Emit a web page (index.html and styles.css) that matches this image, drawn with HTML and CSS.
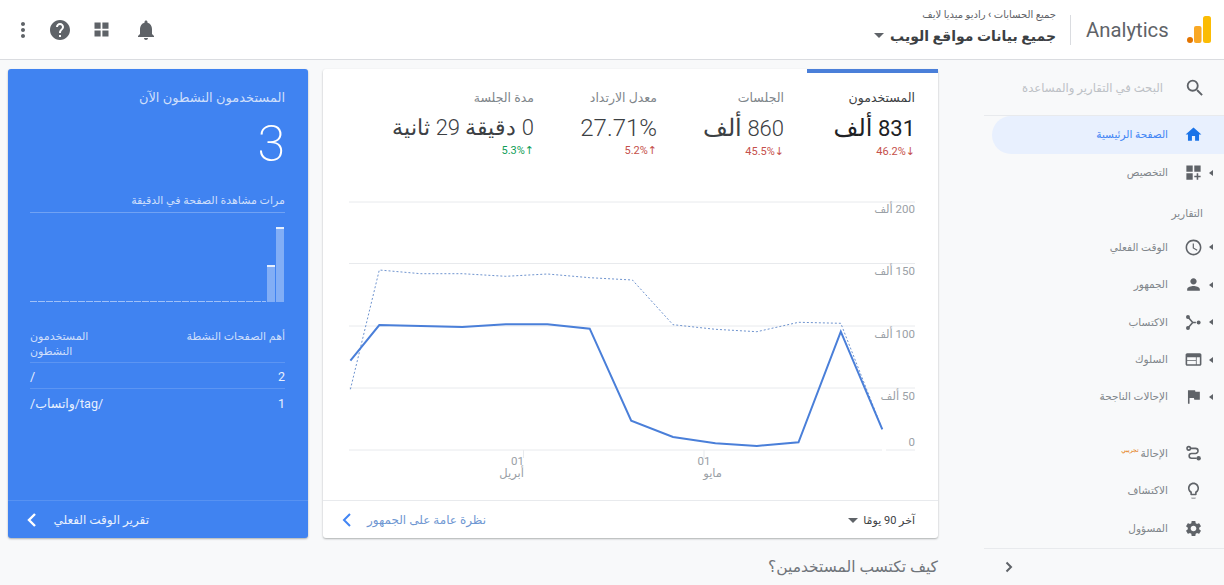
FILE: index.html
```html
<!DOCTYPE html>
<html lang="ar">
<head>
<meta charset="utf-8">
<title>Analytics</title>
<link rel="stylesheet" href="styles.css">
</head>
<body>
<header class="topbar">
  <div class="tools">
    <svg class="tool tool-dots" viewBox="0 0 24 24"><path d="M12 8c1.100 0 2-.9 2-2s-.9-2-2-2-2 .9-2 2 .9 2 2 2zm0 2c-1.100 0-2 .9-2 2s.9 2 2 2 2-.9 2-2-.9-2-2-2zm0 6c-1.100 0-2 .9-2 2s.9 2 2 2 2-.9 2-2-.9-2-2-2z"/></svg>
    <svg class="tool tool-help" viewBox="0 0 24 24"><path d="M12 2C6.480 2 2 6.480 2 12s4.480 10 10 10 10-4.480 10-10S17.520 2 12 2zm1 17h-2v-2h2v2zm2.070-7.750l-.9.92C13.450 12.900 13 13.500 13 15h-2v-.5c0-1.100.45-2.100 1.170-2.830l1.240-1.260c.37-.36.59-.86.59-1.410 0-1.100-.9-2-2-2s-2 .9-2 2H8c0-2.210 1.790-4 4-4s4 1.790 4 4c0 .88-.36 1.680-.93 2.250z"/></svg>
    <svg class="tool tool-apps" viewBox="0 0 24 24"><path d="M4 4h7v7H4zM13 4h7v7h-7zM4 13h7v7H4zM13 13h7v7h-7z"/></svg>
    <svg class="tool tool-bell" viewBox="0 0 24 24"><path d="M12 22c1.100 0 2-.9 2-2h-4c0 1.100.9 2 2 2zm6-6v-5c0-3.070-1.640-5.640-4.500-6.320V4c0-.83-.67-1.500-1.500-1.500s-1.500.67-1.500 1.500v.68C7.630 5.360 6 7.920 6 11v5l-2 2v1h16v-1l-2-2z"/></svg>
  </div>
  <div class="brand">
    <div class="account" dir="rtl">
      <div class="crumbs">جميع الحسابات <span class="crumb-sep">›</span> راديو ميديا لايف</div>
      <div class="view">جميع بيانات مواقع الويب <i class="caret caret-dark"></i></div>
    </div>
    <div class="divider"></div>
    <div class="wordmark">Analytics</div>
    <svg class="logo" viewBox="0 0 24 28"><circle cx="3" cy="24" r="3" fill="#e37400"/><rect x="7" y="10" width="7.500" height="17" rx="2" fill="#f9a825"/><rect x="16" y="0" width="8" height="27" rx="2.500" fill="#fbbc04"/></svg>
  </div>
</header>

<div class="page">
  <main class="main">
    <div class="cards">
      <section class="live" dir="rtl">
        <div class="live-body">
          <div class="live-title">المستخدمون النشطون الآن</div>
          <div class="live-count">3</div>
          <div class="live-sub">مرات مشاهدة الصفحة في الدقيقة</div>
          <div class="bars" dir="ltr">
            <div class="bars-base"></div>
            <div class="bar bar-short"></div>
            <div class="bar bar-tall"></div>
          </div>
          <div class="live-head">
            <div>أهم الصفحات النشطة</div>
            <div class="live-head-end">المستخدمون<br>النشطون</div>
          </div>
          <div class="live-row"><span class="num">2</span><span class="path">/</span></div>
          <div class="live-row live-row-last"><span class="num">1</span><span class="path">/tag/واتساب/</span></div>
        </div>
        <div class="live-foot">
          <span>تقرير الوقت الفعلي</span>
          <svg class="foot-chev" viewBox="0 0 12 16"><path d="M9 2 3 8l6 6" fill="none" stroke="#fff" stroke-width="2.400"/></svg>
        </div>
      </section>

      <section class="panel">
        <div class="tabs" dir="rtl">
          <div class="tab tab-on">
            <div class="tab-label">المستخدمون</div>
            <div class="tab-value">831 <span class="unit">ألف</span></div>
            <div class="tab-delta down">46.2%<b>↓</b></div>
          </div>
          <div class="tab tab-2">
            <div class="tab-label">الجلسات</div>
            <div class="tab-value">860 <span class="unit">ألف</span></div>
            <div class="tab-delta down">45.5%<b>↓</b></div>
          </div>
          <div class="tab tab-3">
            <div class="tab-label">معدل الارتداد</div>
            <div class="tab-value tab-value-wide">27.71%</div>
            <div class="tab-delta down">5.2%<b>↑</b></div>
          </div>
          <div class="tab tab-4">
            <div class="tab-label">مدة الجلسة</div>
            <div class="tab-value">0 دقيقة 29 ثانية</div>
            <div class="tab-delta up">5.3%<b>↑</b></div>
          </div>
        </div>
        <svg class="chart" viewBox="323 180 615 320">
          <g class="grid">
            <path d="M349 202H915M349 263.500H915M349 326H915M349 388H915M349 450H882M886 450H915"/>
            <path d="M523.500 450v8M704 450v8"/>
          </g>
          <polyline class="line-prev" points="350.400,389.300 379.300,270 420.800,273.700 462.300,273.700 505.800,276.300 547.400,274 589.700,277.700 632.400,280 673,324.700 715.400,329.300 756.900,331.700 798.500,322.300 840.800,323.300 882.300,429.300"/>
          <polyline class="line-cur" points="350.400,360.700 379.300,325 420.800,326 462.300,327 505.800,324.300 547.400,324.300 589.700,328.700 631.200,420.700 673,437 715.400,443.300 756.900,446 798.500,442.300 840.800,331.700 882.300,429.300"/>
          <g class="axis">
            <text x="915" y="213" class="ax-end">200 ألف</text>
            <text x="915" y="275" class="ax-end">150 ألف</text>
            <text x="915" y="338" class="ax-end">100 ألف</text>
            <text x="915" y="400" class="ax-end">50 ألف</text>
            <text x="915" y="446" class="ax-zero">0</text>
            <text x="524" y="465" class="ax-x">01</text>
            <text x="524" y="477" class="ax-x">أبريل</text>
            <text x="704" y="465" class="ax-x2">01</text>
            <text x="722" y="477" class="ax-x">مايو</text>
          </g>
        </svg>
        <div class="panel-foot">
          <div class="link"><svg class="link-chev" viewBox="0 0 12 16"><path d="M9 2 3 8l6 6" fill="none" stroke="#4285f4" stroke-width="2"/></svg></div>
          <div class="link-text">نظرة عامة على الجمهور</div>
          <div class="range"><i class="caret caret-dark"></i><span>آخر 90 يومًا</span></div>
        </div>
      </section>
    </div>
    <h2 class="question" dir="rtl">كيف تكتسب المستخدمين؟</h2>
  </main>

  <aside class="side" dir="rtl">
    <div class="search">
      <svg class="ico" viewBox="0 0 24 24"><path d="M15.500 14h-.79l-.28-.27A6.471 6.471 0 0 0 16 9.500 6.500 6.500 0 1 0 9.500 16c1.610 0 3.090-.59 4.230-1.570l.27.28v.79l5 4.990L20.490 19l-4.990-5zm-6 0C7.010 14 5 11.990 5 9.500S7.010 5 9.500 5 14 7.010 14 9.500 11.990 14 9.500 14z"/></svg>
      <span>البحث في التقارير والمساعدة</span>
    </div>
    <a class="nav nav-on"><i class="tri tri-none"></i><svg class="ico" viewBox="0 0 24 24"><path d="M10 20v-6h4v6h5v-8h3L12 3 2 12h3v8z"/></svg><span>الصفحة الرئيسية</span></a>
    <a class="nav"><i class="tri"></i><svg class="ico" viewBox="0 0 24 24"><path d="M3 3h8v8H3zM13 3h8v8h-8zM3 13h8v8H3zM16 13h2v3h3v2h-3v3h-2v-3h-3v-2h3z"/></svg><span>التخصيص</span></a>
    <div class="nav-label">التقارير</div>
    <a class="nav"><i class="tri"></i><svg class="ico" viewBox="0 0 24 24"><path d="M11.990 2C6.470 2 2 6.480 2 12s4.470 10 9.990 10C17.520 22 22 17.520 22 12S17.520 2 11.990 2zM12 20c-4.420 0-8-3.580-8-8s3.580-8 8-8 8 3.580 8 8-3.580 8-8 8zm.5-13H11v6l5.250 3.150.75-1.230-4.500-2.670z"/></svg><span>الوقت الفعلي</span></a>
    <a class="nav"><i class="tri"></i><svg class="ico" viewBox="0 0 24 24"><path d="M12 12c2.210 0 4-1.790 4-4s-1.790-4-4-4-4 1.790-4 4 1.790 4 4 4zm0 2c-2.670 0-8 1.340-8 4v2h16v-2c0-2.660-5.330-4-8-4z"/></svg><span>الجمهور</span></a>
    <a class="nav"><i class="tri"></i><svg class="ico" viewBox="0 0 24 24"><path d="M5 5 11 12 5 19M11 12H15" fill="none" stroke="#5f6368" stroke-width="2"/><circle cx="5" cy="5" r="2.500"/><circle cx="5" cy="19" r="2.500"/><circle cx="18.500" cy="12" r="2.500"/></svg><span>الاكتساب</span></a>
    <a class="nav"><i class="tri"></i><svg class="ico" viewBox="0 0 24 24"><path d="M20 4H4c-1.100 0-1.990.9-1.990 2L2 18c0 1.100.9 2 2 2h16c1.100 0 2-.9 2-2V6c0-1.100-.9-2-2-2zm-5 14H4v-4h11v4zm0-5H4V9h11v4zm5 5h-4V9h4v9z"/></svg><span>السلوك</span></a>
    <a class="nav"><i class="tri"></i><svg class="ico" viewBox="0 0 24 24"><path d="M14.400 6 14 4H5v17h2v-7h5.600l.4 2h7V6z"/></svg><span>الإحالات الناجحة</span></a>
    <div class="nav-gap"></div>
    <a class="nav"><i class="tri tri-none"></i><svg class="ico" viewBox="0 0 24 24"><circle cx="6" cy="5.500" r="2.200" fill="none" stroke="#5f6368" stroke-width="2"/><path d="M8 5.500h6.500a3.200 3.200 0 0 1 0 6.400H9.500a3 3 0 0 0 0 6H16" fill="none" stroke="#5f6368" stroke-width="2"/><circle cx="18.500" cy="18" r="2.800"/></svg><span>الإحالة<sup class="beta">تجريبي</sup></span></a>
    <a class="nav"><i class="tri tri-none"></i><svg class="ico" viewBox="0 0 24 24"><path d="M9 21c0 .55.450 1 1 1h4c.55 0 1-.45 1-1H9zM12 2C8.140 2 5 5.140 5 9c0 2.380 1.190 4.470 3 5.740V17c0 .55.450 1 1 1h6c.55 0 1-.45 1-1v-2.260c1.810-1.270 3-3.360 3-5.740 0-3.860-3.140-7-7-7zm2.850 11.100-.85.6V16h-4v-2.300l-.85-.6A4.997 4.997 0 0 1 7 9c0-2.760 2.240-5 5-5s5 2.240 5 5c0 1.630-.8 3.160-2.150 4.100z"/></svg><span>الاكتشاف</span></a>
    <a class="nav"><i class="tri tri-none"></i><svg class="ico" viewBox="0 0 24 24"><path d="M19.140 12.940c.04-.3.06-.61.06-.94 0-.32-.02-.64-.07-.94l2.030-1.580a.49.49 0 0 0 .12-.61l-1.920-3.320a.488.488 0 0 0-.59-.22l-2.390.96c-.5-.38-1.030-.7-1.620-.94l-.36-2.540a.484.484 0 0 0-.48-.41h-3.840c-.24 0-.43.17-.47.41l-.36 2.540c-.59.24-1.130.57-1.620.94l-2.390-.96c-.22-.08-.47 0-.59.22L2.740 8.870c-.12.21-.08.47.12.61l2.030 1.580c-.05.3-.09.63-.09.94s.02.64.07.94l-2.030 1.580a.49.49 0 0 0-.12.61l1.920 3.320c.12.22.37.29.59.22l2.390-.96c.5.38 1.030.7 1.620.94l.36 2.540c.05.24.24.41.48.41h3.840c.24 0 .44-.17.47-.41l.36-2.540c.59-.24 1.130-.56 1.620-.94l2.390.96c.22.08.47 0 .59-.22l1.920-3.320c.12-.22.07-.47-.12-.61l-2.010-1.580zM12 15.600c-1.980 0-3.600-1.620-3.600-3.600s1.620-3.600 3.600-3.600 3.600 1.620 3.600 3.600-1.620 3.600-3.600 3.600z"/></svg><span>المسؤول</span></a>
    <div class="side-foot"><svg class="side-chev" viewBox="0 0 12 16"><path d="M3.500 3.500 8 8l-4.500 4.500" fill="none" stroke="#5f6368" stroke-width="2"/></svg></div>
  </aside>
</div>
</body>
</html>
```

FILE: styles.css
```css
* { box-sizing: border-box; }
html, body { margin: 0; height: 585px; overflow: hidden; }
body { background: #f8f9fa; font-family: Roboto, "DejaVu Sans", sans-serif; color: #5f6368; }

.topbar { height: 60px; background: #fff; border-bottom: 1px solid #dadce0; display: flex; justify-content: space-between; align-items: center; padding-right: 13px; }
.tools { display: flex; align-items: center; }
.tool { fill: #5f6368; display: block; }
.tool-dots { width: 24px; height: 24px; margin-left: 11px; }
.tool-help { width: 24px; height: 24px; margin-left: 13px; }
.tool-apps { width: 21px; height: 21px; margin-left: 19px; }
.tool-bell { width: 24px; height: 24px; margin-left: 22px; }
.brand { display: flex; align-items: center; }
.account { display: flex; flex-direction: column; align-items: flex-start; }
.crumbs { font-size: 10px; line-height: 12px; color: #5f6368; margin-top: -4px; }
.crumb-sep { font-weight: 700; }
.view { font-size: 14px; line-height: 22px; color: #3c4043; font-weight: 700; margin-top: 4px; display: flex; align-items: center; gap: 6px; }
.caret { display: inline-block; width: 0; height: 0; border-left: 5px solid transparent; border-right: 5px solid transparent; border-top: 5px solid #5f6368; }
.divider { width: 1px; height: 30px; background: #dadce0; margin: 0 15px 0 14px; }
.wordmark { font-size: 20.300px; line-height: 24px; color: #5f6368; width: 84px; margin-right: 17px; white-space: nowrap; }
.logo { width: 24px; height: 28px; display: block; }

.page { display: flex; height: 525px; }
.main { width: 984px; padding: 9px 0 0 8px; }
.cards { display: flex; gap: 15px; height: 469px; }

.live { width: 300px; background: #4083f1; border-radius: 3px; box-shadow: 0 1px 2px rgba(60,64,67,.4); display: flex; flex-direction: column; color: #cfdffb; }
.live-body { flex: 1; padding: 20px 23px 0 22px; }
.live-title { font-size: 13px; line-height: 18px; }
.live-count { font-size: 50px; line-height: 56px; font-weight: 200; color: #fff; margin-top: 9px; }
.live-sub { font-size: 11px; line-height: 16px; margin-top: 21px; padding-bottom: 3px; border-bottom: 1px solid rgba(255,255,255,.25); }
.bars { height: 76px; margin: 13px 1px 0 0; display: flex; justify-content: flex-end; align-items: flex-end; gap: 1px; }
.bars-base { flex: 1; height: 1px; background: repeating-linear-gradient(90deg, rgba(255,255,255,.5) 0 7px, transparent 7px 8px); }
.bar { width: 8px; background: rgba(255,255,255,.35); border-top: 2px solid transparent; position: relative; }
.bar::before { content: ""; position: absolute; left: 0; right: 0; top: -2px; height: 2px; background: rgba(255,255,255,.8); }
.bar-short { height: 37px; }
.bar-tall { height: 75px; }
.live-head { display: flex; justify-content: space-between; font-size: 11px; line-height: 15px; margin-top: 27px; padding-bottom: 3px; border-bottom: 1px solid rgba(255,255,255,.15); }
.live-head-end { width: 59px; text-align: left; }
.live-row { display: flex; justify-content: space-between; align-items: center; height: 26px; padding-top: 2px; font-size: 12.500px; color: #e8f0fe; border-bottom: 1px solid rgba(255,255,255,.15); }
.live-row-last { border-bottom: 0; }
.live-foot { height: 38px; border-top: 1px solid rgba(255,255,255,.12); display: flex; align-items: center; justify-content: space-between; padding: 1px 159px 0 18px; font-size: 12px; color: #e8f0fe; white-space: nowrap; }
.foot-chev { width: 12px; height: 16px; display: block; }

.panel { width: 615px; background: #fff; border-radius: 3px; box-shadow: 0 1px 2px rgba(60,64,67,.4); display: flex; flex-direction: column; }
.tabs { display: flex; height: 111px; }
.tab { padding: 20px 23px 0 0; color: #80868b; white-space: nowrap; }
.tab-on { width: 131px; border-top: 4px solid #4a7fd9; padding-top: 16px; color: #3c4043; }
.tab-2 { width: 127px; }
.tab-3 { width: 123px; }
.tab-4 { flex: 1; }
.tab-label { font-size: 12.500px; line-height: 18px; }
.tab-value { font-size: 22px; font-weight: 300; line-height: 30px; margin-top: 6px; color: #3c4043; }
.tab-value-wide { font-size: 24px; }
.unit { font-size: 24px; }
.tab-on .tab-value { font-weight: 400; color: #202124; }
.tab-delta { font-size: 11px; line-height: 14px; margin-top: 1px; direction: ltr; text-align: right; }
.tab-delta b { font-weight: 400; font-size: 11px; }
.down { color: #c5504b; }
.up { color: #0f9d58; }

.chart { width: 615px; height: 320px; display: block; flex: none; }
.grid path { fill: none; stroke: #e8eaed; stroke-width: 1; }
.line-cur { fill: none; stroke: #4a7fd9; stroke-width: 2; }
.line-prev { fill: none; stroke: #6f94cf; stroke-width: 1; stroke-dasharray: 2 2; }
.axis text { font-size: 11.500px; fill: #9aa0a6; font-family: Roboto, "DejaVu Sans", sans-serif; }
.ax-end { text-anchor: start; direction: rtl; }
.ax-zero { text-anchor: end; }
.ax-x { text-anchor: end; }
.ax-x2 { text-anchor: middle; }

.panel-foot { flex: 1; display: flex; align-items: center; border-top: 1px solid #e8eaed; padding: 1px 23px 0 18px; }
.link { display: flex; }
.link-chev { width: 12px; height: 16px; display: block; }
.link-text { font-size: 12px; color: #6f97d2; margin-left: 14px; flex: 1; }
.range { display: flex; align-items: center; gap: 5px; font-size: 11px; color: #3c4043; }

.question { font-size: 15.500px; line-height: 20px; font-weight: 400; color: #70757a; margin: 19px 46px 0 0; }

.side { width: 240px; display: flex; flex-direction: column; font-size: 10.500px; color: #80868b; }
.search { height: 56px; display: flex; align-items: center; padding: 1px 18px 0 0; gap: 20px; border-bottom: 1px solid #e8eaed; color: #bdc1c6; font-size: 11.700px; }
.search .ico { width: 22px; height: 22px; }
.ico { width: 19px; height: 19px; margin: 0 .5px; fill: #5f6368; flex: none; display: block; }
.nav { display: flex; align-items: center; height: 37.500px; padding-right: 11px; }
.nav span { margin-right: 15px; white-space: nowrap; }
.tri { width: 0; height: 0; border-top: 3.500px solid transparent; border-bottom: 3.500px solid transparent; border-right: 4px solid #5f6368; margin-left: 6px; flex: none; }
.tri-none { border-color: transparent; }
.nav-on { height: 38px; background: #e8f0fe; border-radius: 19px 0 0 19px; margin-left: 8px; color: #4285f4; }
.nav-on .ico { fill: #1a73e8; }
.nav-label { height: 37px; padding: 15px 21px 0 0; font-size: 10.500px; letter-spacing: 2.500px; line-height: 16px; color: #80868b; }
.nav-gap { height: 19px; flex: none; }
.beta { font-size: 6px; color: #e37400; line-height: 0; margin-right: 2px; }
.side-foot { margin-top: 1px; height: 37px; border-top: 1px solid #e8eaed; display: flex; align-items: center; justify-content: flex-end; padding-left: 19px; }
.side-chev { width: 12px; height: 16px; display: block; }
```
